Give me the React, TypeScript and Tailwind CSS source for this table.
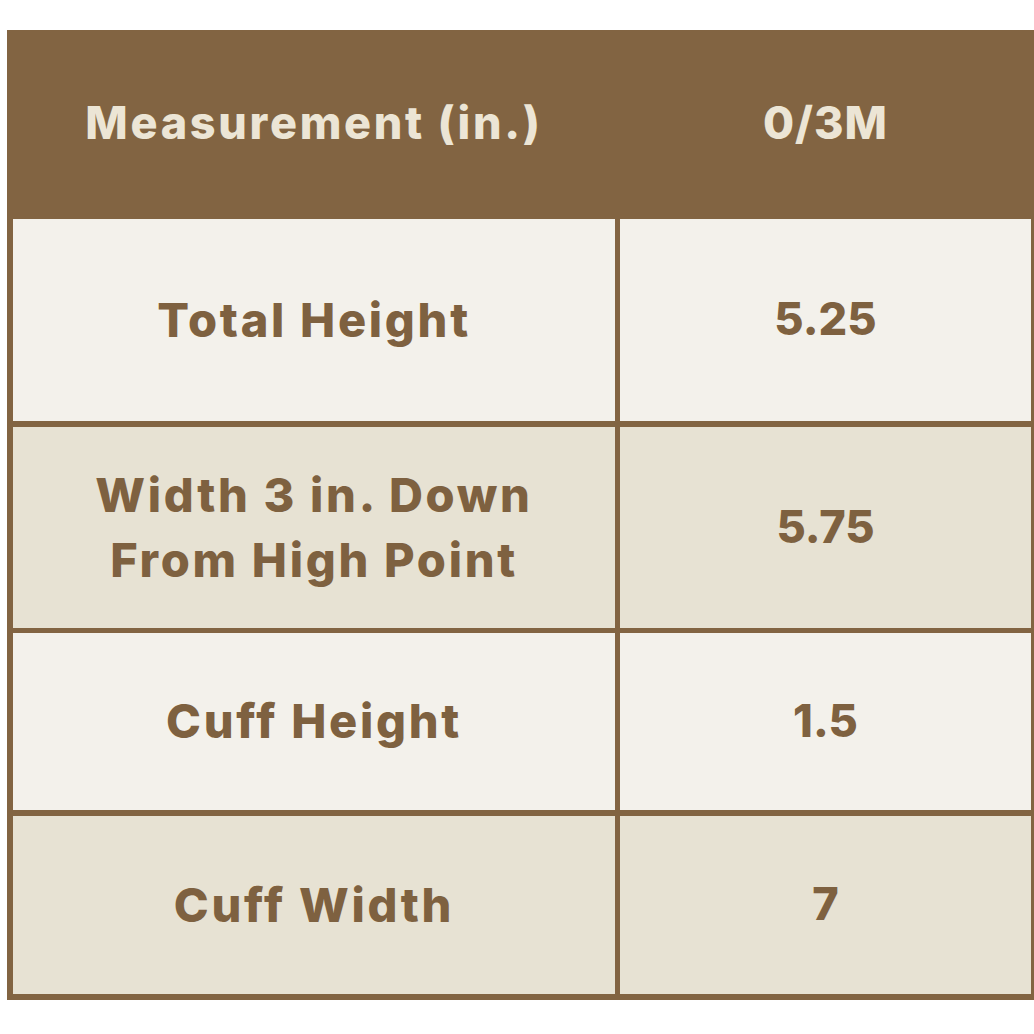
import React from "react";

const rows = [
  { label: ["Total Height"], value: "5.25", h: "h-[202px]", bg: "bg-[#f3f1eb]" },
  { label: ["Width 3 in. Down", "From High Point"], value: "5.75", h: "h-[201px]", bg: "bg-[#e7e2d3]" },
  { label: ["Cuff Height"], value: "1.5", h: "h-[177px]", bg: "bg-[#f3f1eb]" },
  { label: ["Cuff Width"], value: "7", h: "h-[178px]", bg: "bg-[#e7e2d3]" },
];

export default function App() {
  return (
    <div className="w-[1034px] h-[1034px] bg-white overflow-hidden pt-[30px] pl-[7px]" style={{ fontFamily: "Inter, 'Liberation Sans', sans-serif" }}>
      <div className="w-[1030px] bg-[#826442] flex flex-col">
        <div className="h-[189px] flex items-center text-[#ece5d5] font-extrabold text-[45px] pb-[4px]">
          <div className="w-[613px] text-center pl-[1px] tracking-[2.7px]">Measurement (in.)</div>
          <div className="flex-1 text-center pr-[6px] tracking-[1px]">0/3M</div>
        </div>
        <div className="px-[6px] pb-[6px] flex flex-col gap-y-[6px]">
          {rows.map((r, i) => (
            <div key={i} className={`flex gap-x-[5px] ${r.h} ${i === 2 ? "mt-[-1px]" : ""}`}>
              <div className={`w-[602px] ${r.bg} flex flex-col items-center justify-center text-[#7e6140] font-extrabold text-[47px] leading-[65px] tracking-[2.7px] pb-[2px]`}>
                {r.label.map((l) => (
                  <div key={l}>{l}</div>
                ))}
              </div>
              <div className={`flex-1 ${r.bg} flex items-center justify-center text-[#7e6140] font-extrabold text-[45px] pb-[2px]`}>
                {r.value}
              </div>
            </div>
          ))}
        </div>
      </div>
    </div>
  );
}
